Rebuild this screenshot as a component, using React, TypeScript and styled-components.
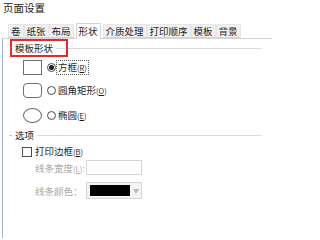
import React from "react";
import styled, { createGlobalStyle } from "styled-components";

const GlobalStyle = createGlobalStyle`
  html, body {
    margin: 0;
    padding: 0;
    background: #ffffff;
  }
  body {
    font-family: "Noto Sans CJK SC", "Noto Sans", sans-serif;
    color: #1a1a1a;
  }
`;

const Window = styled.div`
  width: 272px;
  height: 238px;
  background: #ffffff;
  overflow: hidden;
  display: flex;
  flex-direction: column;
`;

const TitleBar = styled.div`
  height: 17px;
  line-height: 16px;
  padding-left: 3px;
  font-size: 10.5px;
  color: #202020;
`;

const TabStrip = styled.div`
  display: flex;
  align-items: flex-end;
  margin-top: 6px;
  padding-left: 8px;
  height: 15px;
`;

const Tab = styled.div<{ $active?: boolean }>`
  height: ${(p) => (p.$active ? "16px" : "14px")};
  margin-bottom: ${(p) => (p.$active ? "-1px" : "0")};
  padding: 0 2px;
  box-sizing: border-box;
  font-size: 9.5px;
  line-height: ${(p) => (p.$active ? "14px" : "12px")};
  background: ${(p) => (p.$active ? "#ffffff" : "#f0f0f0")};
  border: 1px solid ${(p) => (p.$active ? "#d4d4d4" : "#e6e6e6")};
  border-bottom: ${(p) => (p.$active ? "none" : "1px solid #d4d4d4")};
  margin-left: ${(p) => (p.$active ? "2px" : "0")};
  margin-right: ${(p) => (p.$active ? "2px" : "0")};
  position: relative;
  z-index: ${(p) => (p.$active ? 1 : 0)};
  color: #1e1e1e;
  white-space: nowrap;
`;

const Panel = styled.div`
  flex: 1;
  margin-left: 2px;
  border-left: 1px solid #9db3d3;
  border-top: 1px solid #d4d4d4;
  display: flex;
  flex-direction: column;
`;

const LegendRow = styled.div<{ $pad: number; $top: number; $h: number }>`
  position: relative;
  display: flex;
  align-items: center;
  height: ${(p) => p.$h}px;
  margin-top: ${(p) => p.$top}px;
  padding-left: ${(p) => p.$pad}px;
  padding-right: 11px;
  font-size: 9.5px;
`;

const Dash = styled.span`
  width: 3px;
  height: 1px;
  background: #c8c8c8;
  margin-right: 3px;
`;

const Rule = styled.span`
  flex: 1;
  height: 1px;
  background: #dadada;
  margin-left: 3px;
`;

const Highlight = styled.div`
  position: absolute;
  left: 7px;
  top: 0;
  width: 58px;
  height: 18px;
  box-sizing: border-box;
  border: 2px solid #e52a2a;
`;

const ShapeRow = styled.div<{ $top: number }>`
  display: flex;
  align-items: center;
  height: 15px;
  margin-top: ${(p) => p.$top}px;
  padding-left: 20px;
  font-size: 9.5px;
`;

const Shape = styled.div<{ $kind: "square" | "round" | "ellipse" }>`
  width: 19px;
  height: 15px;
  box-sizing: border-box;
  border: 1px solid #6e6e6e;
  border-radius: ${(p) =>
    p.$kind === "square" ? "0" : p.$kind === "round" ? "4px" : "50%"};
  margin-right: 5px;
`;

const Radio = styled.span<{ $checked?: boolean }>`
  width: 9px;
  height: 9px;
  box-sizing: border-box;
  border-radius: 50%;
  border: 1px solid #4a4a4a;
  background: #ffffff;
  display: flex;
  align-items: center;
  justify-content: center;
  margin-right: 1px;
  &::after {
    content: "";
    width: 5px;
    height: 5px;
    border-radius: 50%;
    background: ${(p) => (p.$checked ? "#1a1a1a" : "transparent")};
  }
`;

const Label = styled.span<{ $focus?: boolean }>`
  display: inline-flex;
  align-items: baseline;
  line-height: 12px;
  padding: 0 1px;
  color: #1e1e1e;
  outline: ${(p) => (p.$focus ? "1px dotted #555" : "none")};
  white-space: nowrap;
`;

const Key = styled.span`
  font-size: 7.5px;
  u {
    text-decoration: underline;
  }
`;

const CheckRow = styled.div`
  display: flex;
  align-items: center;
  height: 11px;
  margin-top: 4px;
  padding-left: 19px;
  font-size: 9.5px;
`;

const Checkbox = styled.span`
  width: 10px;
  height: 10px;
  box-sizing: border-box;
  border: 1px solid #4a4a4a;
  margin-right: 2px;
`;

const FieldRow = styled.div<{ $top: number; $h: number }>`
  display: flex;
  align-items: center;
  height: ${(p) => p.$h}px;
  margin-top: ${(p) => p.$top}px;
  padding-left: 32px;
  font-size: 9.5px;
`;

const FieldLabel = styled.span`
  width: 51px;
  color: #a8a8a8;
  white-space: nowrap;
  display: inline-flex;
  align-items: baseline;
`;

const Input = styled.div`
  width: 56px;
  height: 15px;
  box-sizing: border-box;
  border: 1px solid #d6d6d6;
  background: #ffffff;
`;

const ColorSelect = styled.div`
  width: 56px;
  height: 17px;
  box-sizing: border-box;
  border: 1px solid #d6d6d6;
  background: #f4f4f4;
  display: flex;
  align-items: center;
  padding-left: 3px;
`;

const Swatch = styled.div`
  width: 40px;
  height: 11px;
  background: #000000;
`;

const Arrow = styled.span`
  margin-left: 3px;
  font-size: 6px;
  color: #b8b8b8;
`;

const mn = (txt: string, k: string) => (
  <>
    {txt}
    <Key>
      (<u>{k}</u>)
    </Key>
  </>
);

export default function App() {
  const tabs = ["卷", "纸张", "布局", "形状", "介质处理", "打印顺序", "模板", "背景"];
  return (
    <>
      <GlobalStyle />
      <Window>
        <TitleBar>页面设置</TitleBar>
        <TabStrip>
          {tabs.map((t) => (
            <Tab key={t} $active={t === "形状"}>
              {t}
            </Tab>
          ))}
        </TabStrip>
        <Panel>
          <LegendRow $pad={12} $top={0} $h={18}>
            <span>模板形状</span>
            <Rule />
            <Highlight />
          </LegendRow>
          <ShapeRow $top={3}>
            <Shape $kind="square" />
            <Radio $checked />
            <Label $focus>{mn("方框", "R")}</Label>
          </ShapeRow>
          <ShapeRow $top={8}>
            <Shape $kind="round" />
            <Radio />
            <Label>{mn("圆角矩形", "O")}</Label>
          </ShapeRow>
          <ShapeRow $top={10}>
            <Shape $kind="ellipse" />
            <Radio />
            <Label>{mn("椭圆", "E")}</Label>
          </ShapeRow>
          <LegendRow $pad={6} $top={5} $h={14}>
            <Dash />
            <span>选项</span>
            <Rule />
          </LegendRow>
          <CheckRow>
            <Checkbox />
            <Label>{mn("打印边框", "B")}</Label>
          </CheckRow>
          <FieldRow $top={3} $h={15}>
            <FieldLabel>
              线条宽度<Key>(<u>L</u>)</Key>:
            </FieldLabel>
            <Input />
          </FieldRow>
          <FieldRow $top={7} $h={17}>
            <FieldLabel>线条颜色：</FieldLabel>
            <ColorSelect>
              <Swatch />
              <Arrow>▼</Arrow>
            </ColorSelect>
          </FieldRow>
        </Panel>
      </Window>
    </>
  );
}
